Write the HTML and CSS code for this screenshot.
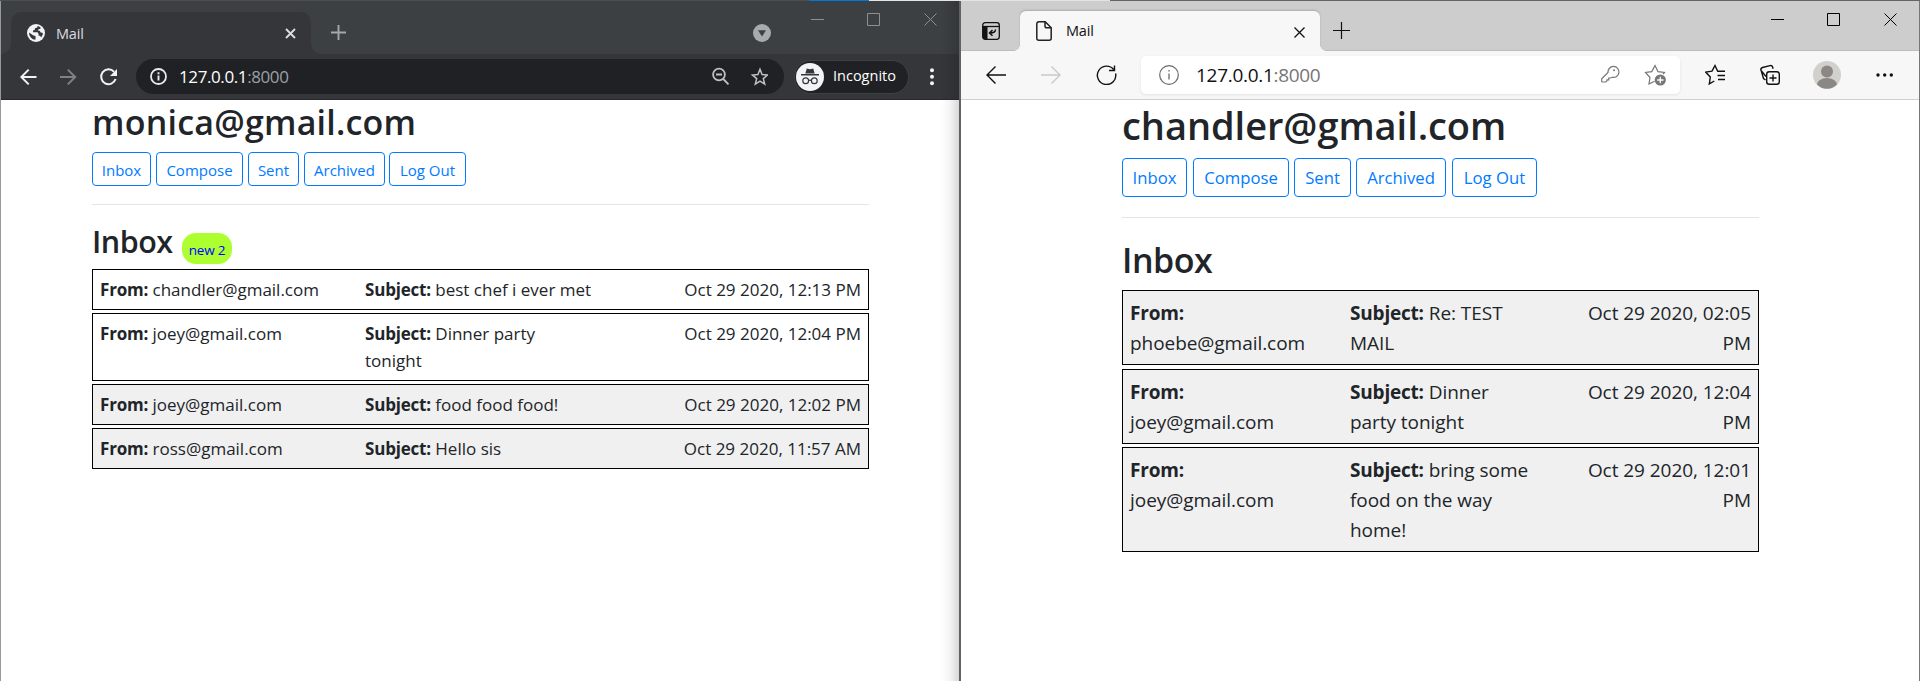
FILE: index.html
```html
<!DOCTYPE html>
<html lang="en">
<head>
<meta charset="utf-8">
<title>Mail</title>
<link rel="stylesheet" href="styles.css">
</head>
<body>
<div class="top-edge"><i class="edge-dark"></i><i class="edge-blue"></i><i class="edge-light"></i><i class="edge-gray"></i></div>
<div class="desktop">
<section class="window chrome">
  <header class="tabstrip">
    <div class="tab">
      <svg class="favicon" width="18" height="18" viewBox="0 0 18 18"><circle cx="9" cy="9" r="9" fill="#f1f3f4"/><path d="M10.5 2 10.3 3.6 8 4.2 7.7 6 6 6.4V8.3h4.6l1 1.6v1.8h1.5l1 1.8A7 7 0 0 0 16 9l-2.3-.4-1-1.8L10.800 6.500l1-1.500 1.600-.1.1-1.400A7 7 0 0 0 10.500 2ZM2 8.500l4.400 3.100 2.100.4v3.800A7 7 0 0 1 2 8.500Z" fill="#35363a"/></svg>
      <span class="tab-title">Mail</span>
      <svg class="tab-close" width="11" height="11" viewBox="0 0 11 11"><path d="m1 1 9 9M10 1l-9 9" stroke="#dadce0" stroke-width="1.900"/></svg>
    </div>
    <svg class="tab-plus" width="15" height="15" viewBox="0 0 15 15"><path d="M7.500 0v15M0 7.500h15" stroke="#a5a8aa" stroke-width="1.900"/></svg>
    <svg class="tab-search" width="18" height="18" viewBox="0 0 18 18"><circle cx="9" cy="9" r="9" fill="#a7abae"/><path d="M5 6.300h8L9 12.500Z" fill="#3c4043"/></svg>
    <svg class="captions" width="128" height="14" viewBox="0 0 128 14" fill="none" stroke="#8d9092"><path d="M0 6.500h13M56.500.5h12v12h-12zM113.500.5l12 12M125.500.5l-12 12"/></svg>
  </header>
  <div class="toolbar">
    <svg class="nav" width="98" height="18" viewBox="0 0 98 18" fill="none" stroke-width="2"><path d="M16.500 9H1.500M8.700 1.600 1.300 9l7.400 7.400" stroke="#f1f3f4"/><path d="M40 9h15M47.800 1.600 55.200 9l-7.400 7.400" stroke="#7f8184"/><path d="M94 3.700A7.400 7.400 0 1 0 95.600 11" stroke="#f1f3f4"/><path d="M97 1v7h-7z" fill="#f1f3f4"/></svg>
    <div class="omnibox">
      <svg width="17" height="17" viewBox="0 0 17 17"><circle cx="8.500" cy="8.500" r="7.500" fill="none" stroke="#e8eaed" stroke-width="1.800"/><path d="M8.500 7.500v5M8.500 4.300v2" stroke="#e8eaed" stroke-width="1.900"/></svg>
      <span class="url">127.0.0.1<span class="port">:8000</span></span>
      <svg class="omni-actions" width="56" height="19" viewBox="0 0 56 19" fill="none" stroke="#bdc1c6" stroke-width="1.800"><circle cx="7" cy="7.500" r="5.900"/><path d="m11.300 12 5.200 5.300M4 7.500h6"/><path d="m48 2.300 2.100 5.300 5.400.4-4.200 3.600 1.400 5.500-4.700-3-4.700 3 1.400-5.500L40.500 8l5.400-.4Z" stroke-width="1.500"/></svg>
    </div>
    <div class="incognito">
      <svg width="28" height="28" viewBox="0 0 28 28"><circle cx="14" cy="14" r="14" fill="#f1f3f4"/><path d="m9.300 10.500 1.500-5 3.200.8 3.200-.8 1.500 5ZM5 11h18v1.500H5Z" fill="#35363a"/><g fill="none" stroke="#35363a" stroke-width="1.200"><circle cx="9.700" cy="17.800" r="2.900"/><circle cx="18.300" cy="17.800" r="2.900"/><path d="M12.600 17.500q1.400-.8 2.800 0"/></g></svg>
      <span>Incognito</span>
    </div>
    <svg class="dots" width="4" height="18" viewBox="0 0 4 18" fill="#f1f3f4"><circle cx="2" cy="2.200" r="2"/><circle cx="2" cy="8.700" r="2"/><circle cx="2" cy="15.200" r="2"/></svg>
  </div>
  <main class="page">
    <h2>monica@gmail.com</h2>
    <nav class="buttons"><button class="w-inbox">Inbox</button><button class="w-compose">Compose</button><button class="w-sent">Sent</button><button class="w-archived">Archived</button><button class="w-logout">Log Out</button></nav>
    <hr>
    <h3><span class="title">Inbox</span><span class="badge">new 2</span></h3>
    <div class="mails">
      <article><p><b>From:</b> chandler@gmail.com</p><p><b>Subject:</b> best chef i ever met</p><time>Oct 29 2020, 12:13 PM</time></article>
      <article><p><b>From:</b> joey@gmail.com</p><p><b>Subject:</b> Dinner party<br>tonight</p><time>Oct 29 2020, 12:04 PM</time></article>
      <article class="read"><p><b>From:</b> joey@gmail.com</p><p><b>Subject:</b> food food food!</p><time>Oct 29 2020, 12:02 PM</time></article>
      <article class="read"><p><b>From:</b> ross@gmail.com</p><p><b>Subject:</b> Hello sis</p><time>Oct 29 2020, 11:57 AM</time></article>
    </div>
  </main>
</section>
<section class="window edge">
  <header class="tabstrip">
    <svg class="tab-menu" width="18" height="18" viewBox="0 0 18 18"><rect x=".7" y=".7" width="16.600" height="16.600" rx="2.500" fill="none" stroke="#111" stroke-width="1.300"/><path d="M1 4.500h16" stroke="#111" stroke-width="1.300"/><path d="M1 4.500h4.500V17H2.500L1 16Z" fill="#111"/><path d="M13.500 7.500q0 3.500-5.500 3.500M10.500 8 7.500 11l3 2.800" fill="none" stroke="#111" stroke-width="1.500"/></svg>
    <div class="tab">
      <svg class="favicon" width="16" height="20" viewBox="0 0 16 20" fill="none" stroke="#222" stroke-width="1.500"><path d="M2.800.8h6.400l6 6v10.400a2 2 0 0 1-2 2H2.800a2 2 0 0 1-2-2V2.800a2 2 0 0 1 2-2ZM9 .8v4.500a1.500 1.500 0 0 0 1.500 1.500H15"/></svg>
      <span class="tab-title">Mail</span>
      <svg class="tab-close" width="11" height="11" viewBox="0 0 11 11"><path d="m.5.5 10 10M10.500.5l-10 10" stroke="#111" stroke-width="1.300"/></svg>
    </div>
    <svg class="tab-plus" width="17" height="17" viewBox="0 0 17 17"><path d="M8.500 0v17M0 8.500h17" stroke="#111" stroke-width="1.200"/></svg>
    <svg class="captions" width="128" height="14" viewBox="0 0 128 14" fill="none" stroke="#000"><path d="M0 6.500h13M56.500.5h12v12h-12zM113.500.5l12 12M125.500.5l-12 12"/></svg>
  </header>
  <div class="toolbar">
    <svg class="nav" width="131" height="20" viewBox="0 0 131 20" fill="none" stroke-width="1.400"><path d="M20 10H1M9.500 1.500 1 10l8.500 8.500" stroke="#111"/><path d="M55 10h19M65.500 1.500 74 10l-8.500 8.500" stroke="#c9c9c9"/><path d="M127.700 4.500A9.200 9.200 0 1 0 129.600 8.500M128.500.5v5H123" stroke="#111"/></svg>
    <div class="omnibox">
      <svg width="20" height="20" viewBox="0 0 20 20"><circle cx="10" cy="10" r="9.300" fill="none" stroke="#6b6b6b" stroke-width="1.200"/><path d="M10 8.500v6M10 5v1.600" stroke="#6b6b6b" stroke-width="1.300"/></svg>
      <span class="url">127.0.0.1<span class="port">:8000</span></span>
      <svg class="omni-actions" width="66" height="22" viewBox="0 0 66 22" fill="none" stroke="#767676" stroke-width="1.200"><path d="M7 8.500a5.500 5.500 0 1 1 4.200 4.800L9.500 14H7.800v1.800H6V17L4.500 18H1.500a.8.800 0 0 1-.8-.8v-2.400Z"/><circle cx="13" cy="6.300" r="1" fill="#767676" stroke="none"/><path d="M53.500 17.200 48 20l1-6.500-4.500-5 6.300-.9L54 1.500l3 6.100 6.500.9-1.500 1.700"/><circle cx="59.300" cy="16" r="5.600" fill="#767676" stroke="none"/><path d="M59.300 12.800v6.400M56.100 16h6.400" stroke="#fff" stroke-width="1.300"/></svg>
    </div>
    <svg class="edge-actions" width="188" height="28" viewBox="0 0 188 28" fill="none" stroke="#111" stroke-width="1.400"><path d="m9.300 20-5 2.900 1-6.900-4.600-4.900 6.300-.9L10 4.500l2.700 5.700H20M12.500 14.500H20M13 18.500h7"/><path d="M61 15.500 56 9.500q-.7-2.200 1.500-3l7.500-1.900q2-.5 2.600 1.400l.5 1.800M56.300 10l2.200 7.500 2 1.300"/><rect x="61.700" y="10.700" width="12.600" height="12.600" rx="2.500"/><path d="M68 13.500v7M64.500 17h7"/><g stroke="none"><circle cx="122" cy="14" r="14" fill="#d2d0cd"/><circle cx="122" cy="10.500" r="6" fill="#8b8784"/><path d="M112 23.500a10 6.500 0 0 1 20 0A14 14 0 0 1 112 23.500Z" fill="#8b8784"/><g fill="#111"><circle cx="173" cy="14" r="1.700"/><circle cx="179.700" cy="14" r="1.700"/><circle cx="186.300" cy="14" r="1.700"/></g></g></svg>
  </div>
  <main class="page">
    <h2>chandler@gmail.com</h2>
    <nav class="buttons"><button class="w-inbox">Inbox</button><button class="w-compose">Compose</button><button class="w-sent">Sent</button><button class="w-archived">Archived</button><button class="w-logout">Log Out</button></nav>
    <hr>
    <h3><span class="title">Inbox</span></h3>
    <div class="mails">
      <article class="read"><p><b>From:</b><br>phoebe@gmail.com</p><p><b>Subject:</b> Re: TEST<br>MAIL</p><time>Oct 29 2020, 02:05<br>PM</time></article>
      <article class="read"><p><b>From:</b><br>joey@gmail.com</p><p><b>Subject:</b> Dinner<br>party tonight</p><time>Oct 29 2020, 12:04<br>PM</time></article>
      <article class="read"><p><b>From:</b><br>joey@gmail.com</p><p><b>Subject:</b> bring some<br>food on the way<br>home!</p><time>Oct 29 2020, 12:01<br>PM</time></article>
    </div>
  </main>
</section>
</div>
</body>
</html>
```
FILE: styles.css
```css
* { box-sizing: border-box; }
body { margin: 0; width: 1920px; height: 681px; overflow: hidden; background: #fff; font-family: "Open Sans", "Noto Sans", sans-serif; color: #212529; }
svg { display: block; flex: none; }
h2, h3, p { margin: 0; }
.top-edge { display: flex; height: 1px; }
.edge-dark { width: 809px; background: #4c5052; }
.edge-blue { width: 60px; background: #0078d7; }
.edge-light { width: 241px; background: #e3e5e4; }
.edge-gray { flex: 1; background: #656365; }
.desktop { display: flex; height: 680px; }
.window { display: flex; flex-direction: column; white-space: nowrap; }
.tabstrip, .toolbar, .omnibox, .tab { display: flex; align-items: center; }
.tab-close, .omni-actions { margin-left: auto; }

.chrome { width: 959px; border-left: 1px solid #999; background: linear-gradient(90deg, #fff 940px, #f4f4f4 949px, #d8d8d8); }
.chrome .tabstrip { height: 53px; background: linear-gradient(90deg, #3c4043 940px, #34373a); align-items: flex-start; }
.chrome .tab { position: relative; width: 300px; height: 42px; margin: 11px 0 0 10px; padding: 0 15px 0 16px; border-radius: 10px 10px 0 0; background: #35363a; }
.chrome .tab::before, .chrome .tab::after { content: ""; position: absolute; bottom: 0; width: 10px; height: 10px; }
.chrome .tab::before { left: -10px; background: radial-gradient(circle at 0 0, transparent 9.5px, #35363a 10px); }
.chrome .tab::after { right: -10px; background: radial-gradient(circle at 100% 0, transparent 9.5px, #35363a 10px); }
.chrome .tab-title { margin-left: 11px; font-size: 14.5px; color: #dadce0; letter-spacing: -.2px; }
.chrome .tab-plus { margin: 24px 0 0 20px; }
.chrome .tab-search { margin: 23px 0 0 407px; }
.chrome .captions { margin: 12px 0 0 40px; }
.chrome .toolbar { height: 46px; background: linear-gradient(90deg, #35363a 940px, #2e2f33); border-bottom: 1px solid #28292c; padding-left: 19px; }
.chrome .omnibox { width: 648px; height: 35px; margin-left: 18px; padding: 0 16px 0 14px; border-radius: 18px; background: #202124; }
.chrome .url { margin-left: 12px; font-size: 17px; color: #fff; letter-spacing: -.4px; }
.chrome .port { color: #9aa0a6; }
.incognito { display: flex; align-items: center; width: 115px; height: 34px; margin-left: 10px; padding-left: 1px; border: 1px solid #3f4043; border-radius: 17px; background: #202124; color: #fff; font-size: 14.5px; }
.incognito span { margin: -2px 0 0 9px; }
.chrome .dots { margin-left: 21px; }

.edge { width: 961px; border-left: 2px solid #626262; border-right: 1px solid #777; background: #fff; }
.edge .tabstrip { height: 50px; background: #cdcdcd; border-bottom: 1px solid #bdbdbd; align-items: flex-start; }
.tab-menu { margin: 21px 0 0 21px; }
.edge .tab { position: relative; width: 300px; height: 40px; margin: 10px 0 -1px 20px; padding: 0 15px 0 16px; border-radius: 6px 6px 0 0; background: #f7f7f7; box-shadow: 0 -1px 2px #aaa; clip-path: inset(-3px -7px 0); }
.edge .tab::before, .edge .tab::after { content: ""; position: absolute; bottom: 0; width: 6px; height: 6px; }
.edge .tab::before { left: -6px; background: radial-gradient(circle at 0 0, transparent 5.5px, #f7f7f7 6px); }
.edge .tab::after { right: -6px; background: radial-gradient(circle at 100% 0, transparent 5.5px, #f7f7f7 6px); }
.edge .tab-title { margin: 0 0 2px 14px; font-size: 14.5px; color: #111; letter-spacing: -.2px; }
.edge .tab-close { margin-top: 2px; }
.edge .tab-plus { margin: 21px 0 0 13px; }
.edge .captions { margin: 12px 0 0 421px; }
.edge .toolbar { height: 49px; background: #f7f7f7; border-bottom: 1px solid #cfcfcf; padding-left: 25px; }
.edge .omnibox { width: 539px; height: 38px; margin-left: 24px; padding: 0 13px 0 18px; border-radius: 5px; background: #fff; box-shadow: 0 1px 3px #e3e3e3; }
.edge .url { margin-left: 17px; font-size: 19px; color: #111; letter-spacing: -.3px; }
.edge .port { color: #767676; }
.edge-actions { margin-left: 25px; }

.page { display: flex; flex-direction: column; }
h2, h3 { font-weight: 600; }
h3 { display: flex; }
.buttons { display: flex; }
button { padding: 0; border: 1px solid #007bff; border-radius: 4px; background: #fff; color: #007bff; font-family: inherit; }
hr { width: 100%; height: 1px; border: 0; background: #e5e5e5; }
.mails { display: flex; flex-direction: column; }
article { display: grid; border: 1px solid #000; background: #fff; }
b { letter-spacing: -.2px; }
time { text-align: right; }
.read { background: #f0f0f0; }
.badge { background: #adff2f; color: #00f; font-weight: 400; text-align: center; letter-spacing: -.2px; }

.chrome .page { width: 777px; margin-left: 91px; }
.chrome h2 { height: 45px; font-size: 34px; line-height: 45px; letter-spacing: .22px; }
.chrome .buttons { height: 34px; margin-top: 7px; }
.chrome button { font-size: 15px; line-height: 34px; }
.chrome .w-inbox { width: 59px; margin-right: 5px; }
.chrome .w-compose { width: 87px; margin-right: 5px; }
.chrome .w-sent { width: 51px; margin-right: 5px; }
.chrome .w-archived { width: 81px; margin-right: 4px; }
.chrome .w-logout { width: 77px; }
.chrome hr { margin: 18px 0; }
.chrome h3 { height: 36px; font-size: 30.5px; line-height: 37px; }
.title { letter-spacing: -.5px; }
.chrome .title { width: 81px; }
.badge { width: 50px; height: 31px; margin: 10px 0 0 9px; border-radius: 14px; font-size: 13.5px; line-height: 34px; }
.chrome .mails { gap: 3px; margin-top: 10px; }
.chrome article { grid-template-columns: 265px 1fr auto; padding: 6px 7px; font-size: 17px; line-height: 27px; }

.edge .page { width: 637px; margin-left: 161px; }
.edge h2 { height: 50px; font-size: 38px; line-height: 50px; letter-spacing: -.05px; }
.edge .buttons { height: 39px; margin-top: 8px; }
.edge button { font-size: 16.7px; line-height: 36px; }
.edge .w-inbox { width: 65px; margin-right: 6px; }
.edge .w-compose { width: 96px; margin-right: 5px; }
.edge .w-sent { width: 57px; margin-right: 5px; }
.edge .w-archived { width: 90px; margin-right: 6px; }
.edge .w-logout { width: 85px; }
.edge hr { margin: 20px 0; }
.edge h3 { height: 44px; font-size: 34px; line-height: 44px; }
.edge .mails { margin-top: 8px; }
.edge article { grid-template-columns: 220px 1fr auto; margin-bottom: 3px; padding: 7px 7px 6px; font-size: 19px; line-height: 30px; letter-spacing: -.05px; }
.edge article:first-child { margin-bottom: 4px; }
```
